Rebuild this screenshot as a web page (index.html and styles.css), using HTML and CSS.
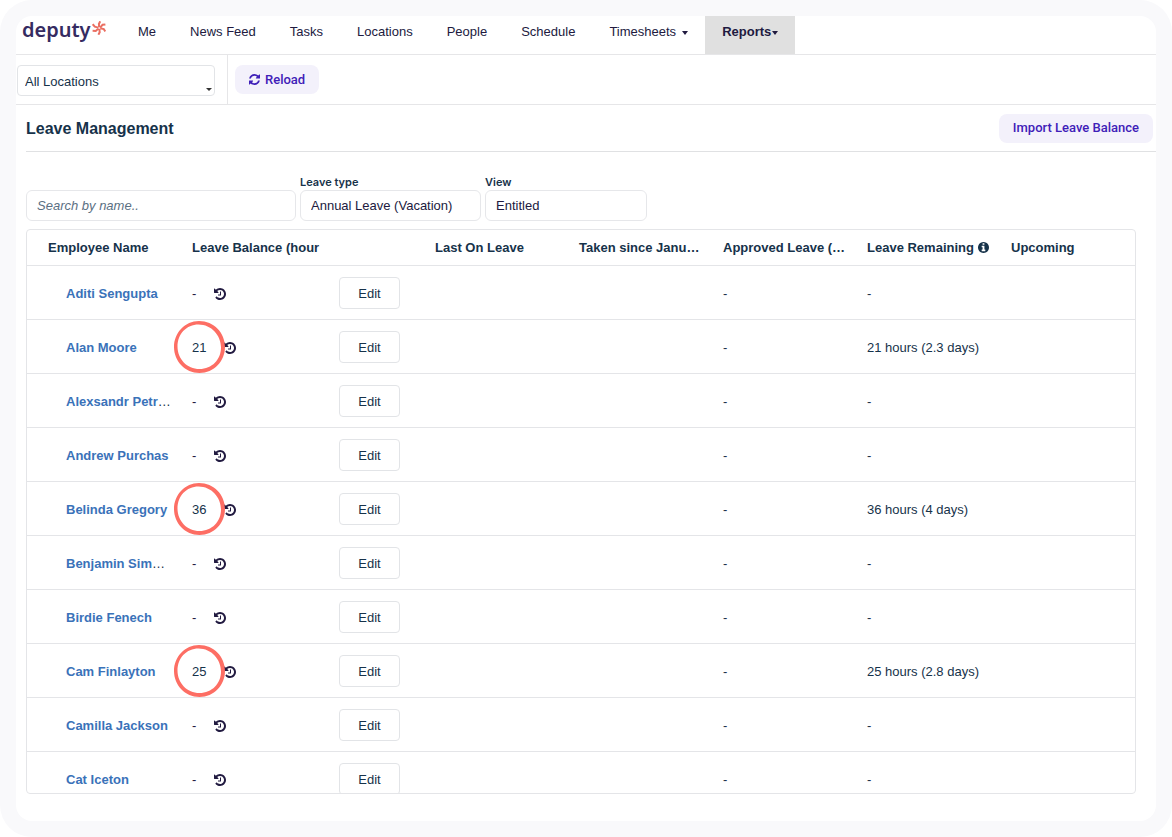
FILE: index.html
```html
<!DOCTYPE html>
<html lang="en">
<head>
<meta charset="utf-8">
<title>Leave Management</title>
<link rel="stylesheet" href="styles.css">
</head>
<body>
<svg class="sprite" aria-hidden="true">
  <symbol id="i-history" viewBox="0 128 1536 1536"><path d="M1536 896q0 156-61 298t-164 245-245 164-298 61q-172 0-327-72.500t-264-204.500q-7-10-6.500-22.500t8.500-20.500l137-138q10-9 25-9 16 2 23 12 73 95 179 147t225 52q104 0 198.500-40.500t163.500-109.500 109.500-163.500 40.500-198.500-40.500-198.500-109.500-163.500-163.500-109.500-198.500-40.500q-98 0-188 35.500t-160 101.500l137 138q31 30 14 69-17 40-59 40h-448q-26 0-45-19t-19-45v-448q0-42 40-59 39-17 69 14l130 129q107-101 244.500-156.500t284.500-55.500q156 0 298 61t245 164 164 245 61 298zM896 608v448q0 14-9 23t-23 9h-320q-14 0-23-9t-9-23v-64q0-14 9-23t23-9h224v-352q0-14 9-23t23-9h64q14 0 23 9t9 23z"/></symbol>
  <symbol id="i-refresh" viewBox="0 128 1536 1536"><path d="M1511 1056q0 5-1 7-64 268-268 434.500t-478 166.500q-146 0-282.500-55t-243.500-157l-129 129q-19 19-45 19t-45-19-19-45v-448q0-26 19-45t45-19h448q26 0 45 19t19 45-19 45l-137 137q71 66 161 102t187 36q134 0 250-65t186-179q11-17 53-117 8-23 30-23h192q13 0 22.500 9.500t9.500 22.500zM1536 256v448q0 26-19 45t-45 19h-448q-26 0-45-19t-19-45 19-45l138-138q-148-137-349-137-134 0-250 65t-186 179q-11 17-53 117-8 23-30 23h-199q-13 0-22.500-9.500t-9.500-22.500v-7q65-268 270-434.500t480-166.500q146 0 284 55.500t245 156.500l130-129q19-19 45-19t45 19 19 45z"/></symbol>
  <symbol id="i-info" viewBox="0 128 1536 1536"><path d="M1024 1376v-160q0-14-9-23t-23-9h-96v-512q0-14-9-23t-23-9h-320q-14 0-23 9t-9 23v160q0 14 9 23t23 9h96v320h-96q-14 0-23 9t-9 23v160q0 14 9 23t23 9h448q14 0 23-9t9-23zM896 480v-160q0-14-9-23t-23-9h-192q-14 0-23 9t-9 23v160q0 14 9 23t23 9h192q14 0 23-9t9-23zM1536 896q0 209-103 385.500t-279.500 279.500-385.500 103-385.500-103-279.500-279.500-103-385.500 103-385.500 279.500-279.500 385.500-103 385.500 103 279.500 279.500 103 385.500z"/></symbol>
  <symbol id="i-ring" viewBox="0 0 51 52"><path fill-rule="evenodd" d="M25 0C40 0 51 12 51 26S40 52 25.500 52 0 40 0 26 11 0 25 0zM24.500 3.500C12.500 3.500 3.500 13 3.500 25.500S13 48 25.500 48 47 38.500 47 26.500 37.500 3.500 24.500 3.500z"/></symbol>
</svg>
<div class="app">
  <div class="panel">
    <header class="topbar">
      <a class="logo" href="#">deputy<svg class="logo-mark" viewBox="0 0 14 14" aria-hidden="true"><path d="M7.200 6.200 6.900 3 8.200.3M8 6.600l2.600-2.800 2.800-.4M8.300 7.200l3.500.9 1.500 2.300M7.300 7.600l.4 3.600-1.300 2.500M6.500 7.600 3.700 9.900.6 9.800M6.400 6.600 2.800 5.600.7 3.200"/></svg></a>
      <nav class="nav">
        <a href="#">Me</a>
        <a href="#">News Feed</a>
        <a href="#">Tasks</a>
        <a href="#">Locations</a>
        <a href="#">People</a>
        <a href="#">Schedule</a>
        <a href="#">Timesheets<span class="caret spaced"></span></a>
        <a class="active" href="#">Reports<span class="caret"></span></a>
      </nav>
    </header>
    <div class="toolbar">
      <div class="location">
        <select class="location-select" aria-label="Location"><option>All Locations</option></select>
        <span class="location-caret"></span>
      </div>
      <button class="btn" type="button"><svg class="icon" aria-hidden="true"><use href="#i-refresh"/></svg>Reload</button>
    </div>
    <main class="main">
      <div class="heading">
        <h1>Leave Management</h1>
        <button class="btn" type="button">Import Leave Balance</button>
      </div>
      <form class="filters">
        <input class="field search" type="text" placeholder="Search by name.." aria-label="Search by name">
        <div class="filter type">
          <label for="type">Leave type</label>
          <select class="field" id="type"><option>Annual Leave (Vacation)</option></select>
        </div>
        <div class="filter view">
          <label for="view">View</label>
          <select class="field" id="view"><option>Entitled</option></select>
        </div>
      </form>
      <div class="grid">
        <table>
          <colgroup><col class="c-name"><col class="c-balance"><col class="c-edit"><col class="c-std"><col class="c-std"><col class="c-std"><col class="c-std"><col></colgroup>
          <thead>
            <tr><th>Employee Name</th><th>Leave Balance (hour</th><th></th><th>Last On Leave</th><th>Taken since Janu…</th><th>Approved Leave (…</th><th>Leave Remaining <svg class="icon info" aria-hidden="true"><use href="#i-info"/></svg></th><th>Upcoming</th></tr>
          </thead>
          <tbody>
            <tr><td><a href="#">Aditi Sengupta</a></td><td><div class="bal"><span class="none">-</span><svg class="icon history"><use href="#i-history"/></svg></div></td><td><button class="edit" type="button">Edit</button></td><td></td><td></td><td>-</td><td>-</td><td></td></tr>
            <tr><td><a href="#">Alan Moore</a></td><td><div class="bal"><span class="hours">21</span><svg class="icon history"><use href="#i-history"/></svg><svg class="ring"><use href="#i-ring"/></svg></div></td><td><button class="edit" type="button">Edit</button></td><td></td><td></td><td>-</td><td>21 hours (2.3 days)</td><td></td></tr>
            <tr><td><a href="#">Alexsandr Petr</a>…</td><td><div class="bal"><span class="none">-</span><svg class="icon history"><use href="#i-history"/></svg></div></td><td><button class="edit" type="button">Edit</button></td><td></td><td></td><td>-</td><td>-</td><td></td></tr>
            <tr><td><a href="#">Andrew Purchas</a></td><td><div class="bal"><span class="none">-</span><svg class="icon history"><use href="#i-history"/></svg></div></td><td><button class="edit" type="button">Edit</button></td><td></td><td></td><td>-</td><td>-</td><td></td></tr>
            <tr><td><a href="#">Belinda Gregory</a></td><td><div class="bal"><span class="hours">36</span><svg class="icon history"><use href="#i-history"/></svg><svg class="ring"><use href="#i-ring"/></svg></div></td><td><button class="edit" type="button">Edit</button></td><td></td><td></td><td>-</td><td>36 hours (4 days)</td><td></td></tr>
            <tr><td><a href="#">Benjamin Sim</a>…</td><td><div class="bal"><span class="none">-</span><svg class="icon history"><use href="#i-history"/></svg></div></td><td><button class="edit" type="button">Edit</button></td><td></td><td></td><td>-</td><td>-</td><td></td></tr>
            <tr><td><a href="#">Birdie Fenech</a></td><td><div class="bal"><span class="none">-</span><svg class="icon history"><use href="#i-history"/></svg></div></td><td><button class="edit" type="button">Edit</button></td><td></td><td></td><td>-</td><td>-</td><td></td></tr>
            <tr><td><a href="#">Cam Finlayton</a></td><td><div class="bal"><span class="hours">25</span><svg class="icon history"><use href="#i-history"/></svg><svg class="ring"><use href="#i-ring"/></svg></div></td><td><button class="edit" type="button">Edit</button></td><td></td><td></td><td>-</td><td>25 hours (2.8 days)</td><td></td></tr>
            <tr><td><a href="#">Camilla Jackson</a></td><td><div class="bal"><span class="none">-</span><svg class="icon history"><use href="#i-history"/></svg></div></td><td><button class="edit" type="button">Edit</button></td><td></td><td></td><td>-</td><td>-</td><td></td></tr>
            <tr><td><a href="#">Cat Iceton</a></td><td><div class="bal"><span class="none">-</span><svg class="icon history"><use href="#i-history"/></svg></div></td><td><button class="edit" type="button">Edit</button></td><td></td><td></td><td>-</td><td>-</td><td></td></tr>
          </tbody>
        </table>
      </div>
    </main>
  </div>
</div>
</body>
</html>
```
FILE: styles.css
```css
* { box-sizing: border-box; }
body {
  margin: 0;
  background: #fff;
  color: #16324a;
  font: 13px/18px "Liberation Sans", Arial, sans-serif;
}
a { text-decoration: none; }
button, input, select { font: inherit; color: inherit; }
button { cursor: pointer; }
.sprite { display: none; }
.icon { width: 11px; height: 11px; fill: currentColor; flex: none; }

.app {
  height: 100vh;
  padding: 16px;
  border-radius: 32px;
  background: #f9f9fb;
}
.panel {
  display: flex;
  flex-direction: column;
  height: 100%;
  border-radius: 16px;
  background: #fff;
  overflow: hidden;
}

.topbar {
  display: flex;
  flex: none;
  height: 39px;
  border-bottom: 1px solid #e6e6e8;
}
.logo {
  display: flex;
  align-items: flex-start;
  width: 105px;
  padding-left: 6px;
  color: #352b61;
  font: 600 20px/28px "Noto Sans", "Open Sans", sans-serif;
}
.logo-mark {
  width: 14px;
  height: 14px;
  margin: 5px 0 0 1px;
  fill: none;
  stroke: #ea6f62;
  stroke-width: 2;
}
.nav { display: flex; }
.nav a {
  display: flex;
  align-items: center;
  padding: 0 17px 6px;
  color: #211a40;
}
.nav .active {
  background: #e0e0e0;
  font-weight: 700;
}
.caret {
  margin: 2px 0 0 1px;
  border: 3px solid transparent;
  border-top: 4px solid currentColor;
  border-bottom: 0;
}
.caret.spaced { margin-left: 6px; }

.toolbar {
  display: flex;
  flex: none;
  height: 50px;
  border-bottom: 1px solid #e6e6e8;
}
.location {
  position: relative;
  width: 212px;
  padding: 10px 12px 0 1px;
  border-right: 1px solid #e6e6e8;
}
.location-select {
  width: 100%;
  height: 31px;
  padding: 2px 7px 0;
  border: 1px solid #e2e4e7;
  border-radius: 4px;
  background: #fff;
  appearance: none;
}
.location-caret {
  position: absolute;
  right: 15px;
  bottom: 13px;
  border: 3px solid transparent;
  border-top: 3px solid #333;
  border-bottom: 0;
}
.btn {
  display: flex;
  align-items: center;
  gap: 5px;
  height: 29px;
  padding: 0 14px;
  border: 0;
  border-radius: 8px;
  background: #f3f1fb;
  color: #3f20b8;
  font-family: Roboto, sans-serif;
  font-weight: 500;
}
.toolbar .btn { margin: 10px 0 0 7px; }

.main {
  display: flex;
  flex: 1;
  flex-direction: column;
  min-height: 0;
  padding: 0 0 27px 10px;
}
.heading {
  display: flex;
  flex: none;
  align-items: center;
  justify-content: space-between;
  height: 47px;
  padding-right: 3px;
  border-bottom: 1px solid #e0e1e3;
}
h1 { margin: 0; padding-top: 2px; font-size: 16px; font-weight: 700; }

.filters {
  display: flex;
  flex: none;
  align-items: flex-end;
  gap: 4px;
  padding: 22px 0 8px;
}
.filter { display: flex; flex-direction: column; }
.filter label {
  font-family: Inter, sans-serif;
  font-size: 11px;
  line-height: 16px;
  font-weight: 600;
}
.field {
  width: 100%;
  height: 31px;
  padding: 0 10px;
  border: 1px solid #e6e7ea;
  border-radius: 6px;
  background: #fff;
  color: #211a40;
  appearance: none;
}
.search { width: 270px; }
.search::placeholder { color: #5b7083; font-style: italic; opacity: 1; }
.type { width: 181px; }
.view { width: 162px; }

.grid {
  flex: 1;
  min-height: 0;
  margin-right: 20px;
  border: 1px solid #e4e5e8;
  border-radius: 4px;
  overflow: auto;
  scrollbar-width: none;
}
table {
  width: 100%;
  border-collapse: separate;
  border-spacing: 0;
  table-layout: fixed;
}
.c-name { width: 153px; }
.c-balance { width: 147px; }
.c-edit { width: 96px; }
.c-std { width: 144px; }
th, td {
  padding: 0 4px 0 12px;
  border-bottom: 1px solid #e4e5e8;
  text-align: left;
  white-space: nowrap;
}
th { height: 36px; }
th:first-child { padding-left: 21px; }
td { height: 54px; padding-top: 2px; }
td:first-child { padding-left: 39px; }
td:first-child a { color: #3a72b9; font-weight: 700; }
td:nth-child(3) { padding-top: 0; }
.info { vertical-align: -1px; }
.history { width: 12px; height: 12px; }
.bal {
  position: relative;
  display: flex;
  align-items: center;
  color: #211a40;
}
.none { width: 22px; }
.hours { width: 32px; color: #16324a; }
.ring {
  position: absolute;
  left: -18px;
  top: -18px;
  width: 51px;
  height: 52px;
  fill: #fd6e64;
}
.edit {
  width: 61px;
  height: 32px;
  padding: 2px 0 0;
  border: 1px solid #e2e4e7;
  border-radius: 4px;
  background: #fff;
}
```
